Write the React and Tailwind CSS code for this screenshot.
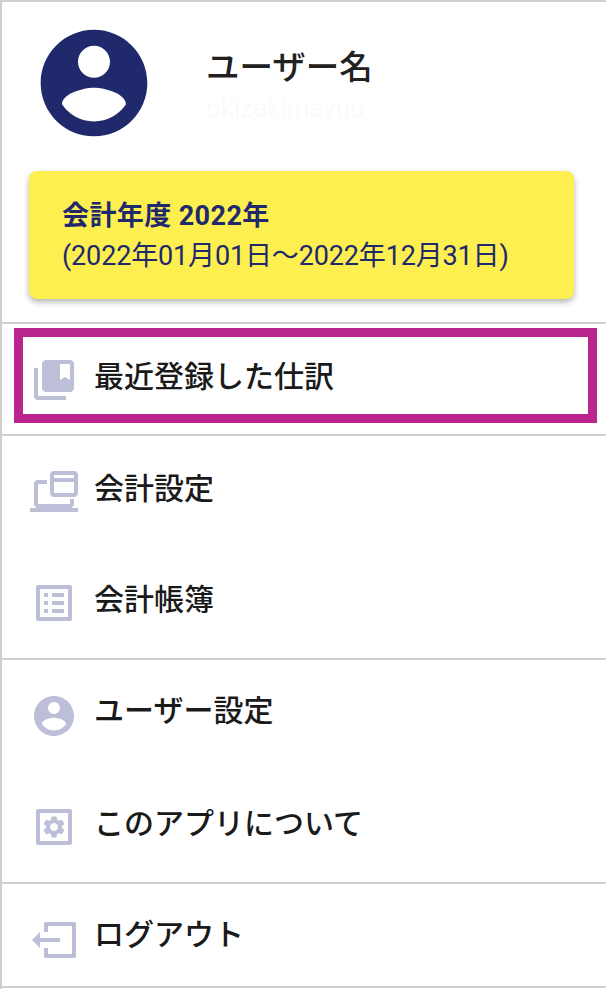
const fontStack = { fontFamily: 'Roboto, "Noto Sans CJK JP", sans-serif' };

const BookmarksIcon = () => (
    <svg viewBox="0 0 24 24" className="w-12 h-12 fill-[#bcbfd7]">
        <path d="M4 6H2v14c0 1.1.9 2 2 2h14v-2H4V6z" />
        <path d="M20 2H8c-1.1 0-2 .9-2 2v12c0 1.1.9 2 2 2h12c1.1 0 2-.9 2-2V4c0-1.1-.9-2-2-2zm0 10l-2.5-1.5L15 12V4h5v8z" />
    </svg>
);

const LaptopIcon = () => (
    <svg viewBox="0 0 48 48" className="w-12 h-12 fill-[#bcbfd7]">
        <path fillRule="evenodd" d="M24 3h20c2.2 0 4 1.8 4 4v18c0 2.2-1.800 4-4 4H24c-2.200 0-4-1.800-4-4V7c0-2.200 1.800-4 4-4zm0 4v3h20V7H24zm0 7v11h20V14H24z" />
        <path d="M8 12h9v4H8v20h32v-5h4v5c0 2.200-1.800 4-4 4H0v4h48v-4H8C5.800 40 4 38.200 4 36V16c0-2.200 1.800-4 4-4z" />
    </svg>
);

const ListIcon = () => (
    <svg viewBox="0 0 24 24" className="w-12 h-12 fill-[#bcbfd7]">
        <path d="M19 5v14H5V5h14m1.100-2H3.900c-.5 0-.9.4-.9.9v16.200c0 .4.4.9.9.9h16.200c.4 0 .9-.5.9-.9V3.900c0-.5-.5-.9-.9-.9zM11 7h6v2h-6V7zm0 4h6v2h-6v-2zm0 4h6v2h-6zM7 7h2v2H7zm0 4h2v2H7zm0 4h2v2H7z" />
    </svg>
);

const AccountIcon = ( { className } ) => (
    <svg viewBox="0 0 24 24" className={className}>
        <path d="M12 2C6.480 2 2 6.480 2 12s4.480 10 10 10 10-4.480 10-10S17.520 2 12 2zm0 3c1.660 0 3 1.340 3 3s-1.340 3-3 3-3-1.340-3-3 1.340-3 3-3zm0 14.200c-2.500 0-4.710-1.280-6-3.220.03-1.990 4-3.080 6-3.080 1.990 0 5.970 1.090 6 3.080-1.290 1.940-3.500 3.220-6 3.220z" />
    </svg>
);

const AppSettingsIcon = () => (
    <svg viewBox="0 0 24 24" className="w-12 h-12 fill-[#bcbfd7]">
        <path fillRule="evenodd" d="M4 3h16c.6 0 1 .4 1 1v16c0 .6-.4 1-1 1H4c-.6 0-1-.4-1-1V4c0-.6.4-1 1-1zm1 2v14h14V5H5z" />
        <g transform="translate(5.400 5.400) scale(0.55)">
            <path d="M19.140 12.940c.04-.3.06-.61.06-.94 0-.32-.02-.64-.07-.94l2.030-1.580c.18-.14.23-.41.12-.61l-1.920-3.320c-.12-.22-.37-.29-.59-.22l-2.390.96c-.5-.38-1.030-.7-1.620-.94l-.36-2.540c-.04-.24-.24-.41-.48-.41h-3.840c-.24 0-.43.17-.47.41l-.36 2.540c-.59.24-1.130.57-1.620.94l-2.390-.96c-.22-.08-.47 0-.59.22L2.740 8.870c-.12.21-.08.47.12.61l2.030 1.580c-.05.3-.09.63-.09.94s.02.64.07.94l-2.030 1.580c-.18.14-.23.41-.12.61l1.920 3.320c.12.22.37.29.59.22l2.390-.96c.5.38 1.030.7 1.620.94l.36 2.540c.05.24.24.41.48.41h3.840c.24 0 .44-.17.47-.41l.36-2.540c.59-.24 1.130-.56 1.620-.94l2.390.96c.22.08.47 0 .59-.22l1.920-3.320c.12-.22.07-.47-.12-.61l-2.010-1.580zM12 15.600c-1.980 0-3.600-1.620-3.600-3.600s1.620-3.600 3.600-3.600 3.600 1.620 3.600 3.600-1.620 3.600-3.600 3.600z" />
        </g>
    </svg>
);

const LogoutIcon = () => (
    <svg viewBox="0 0 24 24" className="w-12 h-12 fill-[#bcbfd7]">
        <path d="M8 3h14c.6 0 1 .4 1 1v16c0 .6-.4 1-1 1H8c-.6 0-1-.4-1-1v-4h2v3h12V5H9v3H7V4c0-.6.4-1 1-1z" />
        <path d="M1 12l4-4v3h10v2H5v3l-4-4z" />
    </svg>
);

const MenuRow = ( { icon, label, highlighted = false, raised = false } ) => (
    <div className="relative h-[111px] flex items-center pl-[28px]">
        {icon}
        <span className={`ml-4 text-[30px] leading-[40px] font-medium text-[#1a1a1a] whitespace-nowrap ${raised ? 'pb-[10px]' : 'pb-[6px]'}`}>
            {label}
        </span>
        {highlighted && (
            <div className="absolute left-[12px] top-[4px] w-[583px] h-[95px] border-[9px] border-[#bb2590]" />
        )}
    </div>
);

export default function App() {
    return (
        <div style={fontStack} className="w-[606px] h-[989px] bg-white border-l-2 border-t-2 border-[#cfcfcf] overflow-hidden">
            <div className="h-[320px]">
                <div className="flex h-[169px]">
                    <AccountIcon className="w-[128px] h-[128px] ml-[28px] mt-[17px] fill-[#20296c]" />
                    <div className="ml-[48px] pt-[42px]">
                        <div className="text-[33.5px] leading-[48px] font-medium text-[#212121]">ユーザー名</div>
                        <div className="text-[26px] leading-[32px] text-[#fafafa] blur-[0.5px]">okizakimayuu</div>
                    </div>
                </div>
                <div className="ml-[27px] w-[545px] h-[128px] rounded-lg bg-[#fdef4f] shadow-[0_3px_6px_rgba(0,0,0,0.3)] pl-[33px] pt-[26px] text-[#20296c] text-[27px] leading-[39px]">
                    <div className="font-bold tracking-[0.4px]">会計年度 2022年</div>
                    <div className="mt-[1px] tracking-[-0.15px] whitespace-nowrap">(2022年01月01日～2022年12月31日)</div>
                </div>
            </div>

            <div className="border-t-2 border-[#cfcfcf] h-[112px] overflow-hidden">
                <MenuRow icon={<BookmarksIcon />} label="最近登録した仕訳" highlighted />
            </div>
            <div className="border-t-2 border-[#cfcfcf]">
                <MenuRow icon={<LaptopIcon />} label="会計設定" />
                <MenuRow icon={<ListIcon />} label="会計帳簿" />
            </div>
            <div className="border-t-2 border-[#cfcfcf]">
                <MenuRow icon={<AccountIcon className="w-12 h-12 fill-[#bcbfd7]" />} label="ユーザー設定" raised />
                <MenuRow icon={<AppSettingsIcon />} label="このアプリについて" />
            </div>
            <div className="border-t-2 border-b-2 border-[#cfcfcf] h-[106px] overflow-hidden">
                <MenuRow icon={<LogoutIcon />} label="ログアウト" raised />
            </div>
        </div>
    );
}
